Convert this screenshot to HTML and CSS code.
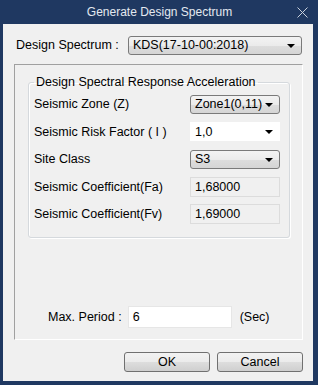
FILE: index.html
```html
<!DOCTYPE html>
<html>
<head>
<meta charset="utf-8">
<link rel="stylesheet" href="styles.css">
</head>
<body>
<div class="window">
  <div class="titlebar">
    <span class="title">Generate Design Spectrum</span>
    <svg class="close" width="11" height="11" viewBox="0 0 11 11"><path d="M0.5 0.5 L10.5 10.5 M10.5 0.5 L0.5 10.5" stroke="#c9d1dd" stroke-width="1" fill="none"/></svg>
  </div>
  <div class="client">
    <div class="top-row">
      <span class="label">Design Spectrum :</span>
      <div class="combo btn-combo wide"><span>KDS(17-10-00:2018)</span><i class="arrow"></i></div>
    </div>
    <div class="panel">
      <fieldset class="group">
        <legend>Design Spectral Response Acceleration</legend>
        <div class="row"><span>Seismic Zone (Z)</span><div class="combo btn-combo"><span>Zone1(0,11)</span><i class="arrow"></i></div></div>
        <div class="row"><span>Seismic Risk Factor ( I )</span><div class="combo white-combo"><span>1,0</span><i class="arrow"></i></div></div>
        <div class="row"><span>Site Class</span><div class="combo btn-combo"><span>S3</span><i class="arrow"></i></div></div>
        <div class="row"><span>Seismic Coefficient(Fa)</span><div class="field readonly">1,68000</div></div>
        <div class="row"><span>Seismic Coefficient(Fv)</span><div class="field readonly">1,69000</div></div>
      </fieldset>
      <div class="period-row">
        <span>Max. Period :</span>
        <div class="field input">6</div>
        <span>(Sec)</span>
      </div>
    </div>
    <div class="buttons">
      <div class="button">OK</div>
      <div class="button">Cancel</div>
    </div>
  </div>
</div>
</body>
</html>
```

FILE: styles.css
```css
html, body {
  margin: 0;
  padding: 0;
}
body {
  font-family: "Liberation Sans", Arial, sans-serif;
  font-size: 12.5px;
  color: #000;
}
.window {
  width: 318px;
  height: 385px;
  background: #1f3861;
  display: flex;
  flex-direction: column;
  box-sizing: border-box;
  padding: 0 5px 4px 3px;
}
.titlebar {
  height: 24px;
  position: relative;
  display: flex;
  align-items: center;
  justify-content: center;
  color: #e4e9f0;
  font-size: 12px;
}
.title {
  margin-left: 3px;
  margin-top: -1px;
}
.close {
  position: absolute;
  right: 5px;
  top: 7px;
}
.client {
  flex: 1;
  background: #f0f0f0;
  display: flex;
  flex-direction: column;
  padding: 12px 10px 9px 11px;
}
.top-row {
  display: flex;
  align-items: center;
  height: 18px;
  padding-left: 2px;
  margin-right: 1px;
}
.top-row .label {
  flex: 1;
}
.combo {
  box-sizing: border-box;
  height: 19px;
  display: flex;
  align-items: center;
  justify-content: space-between;
  padding: 0 6px 0 4px;
}
.combo.wide {
  width: 174px;
}
.btn-combo {
  border: 1px solid #7a7a7a;
  border-radius: 3px;
  background: linear-gradient(#f3f3f3, #ebebeb 50%, #dddddd 51%, #d5d5d5);
}
.white-combo {
  background: #fff;
  border: 1px solid #fff;
}
.arrow {
  width: 0;
  height: 0;
  border-left: 4px solid transparent;
  border-right: 4px solid transparent;
  border-top: 4px solid #000;
  margin-top: 1px;
}
.panel {
  flex: 1;
  margin-top: 10px;
  border-top: 1px solid #a0a0a0;
  border-left: 1px solid #a0a0a0;
  border-right: 1px solid #ffffff;
  border-bottom: 1px solid #ffffff;
  display: flex;
  flex-direction: column;
  padding: 0 12px 11px 13px;
}
.group {
  margin: 10px 0 0 0;
  border: 1px solid #d5d9dd;
  border-radius: 3px;
  box-shadow: inset 1px 1px 0 #fff, 1px 1px 0 #fff;
  padding: 5px 9px 13px 5px;
  display: flex;
  flex-direction: column;
  gap: 7.5px;
  min-width: 0;
}
.group legend {
  padding: 0 2px;
  line-height: 14px;
}
.row {
  display: flex;
  align-items: center;
  justify-content: space-between;
  height: 20px;
}
.row .combo, .row .field {
  width: 90px;
}
.field {
  box-sizing: border-box;
  height: 20px;
  display: flex;
  align-items: center;
  padding: 0 4px;
}
.readonly {
  border: 1px solid #dcdcdc;
  background: #f0f0f0;
}
.input {
  background: #fff;
  border: 1px solid #e6e6e6;
  width: 104px;
  height: 22px;
}
.period-row {
  margin-top: auto;
  display: flex;
  align-items: center;
  padding-left: 20px;
  gap: 6px;
}
.period-row .input + span {
  margin-left: 2px;
}
.buttons {
  display: flex;
  justify-content: flex-end;
  gap: 7px;
  margin-top: 12px;
}
.button {
  box-sizing: border-box;
  width: 86px;
  height: 20px;
  border: 1px solid #707070;
  border-radius: 3px;
  background: linear-gradient(#f2f2f2, #ebebeb 50%, #dddddd 51%, #cfcfcf);
  display: flex;
  align-items: center;
  justify-content: center;
}
```
